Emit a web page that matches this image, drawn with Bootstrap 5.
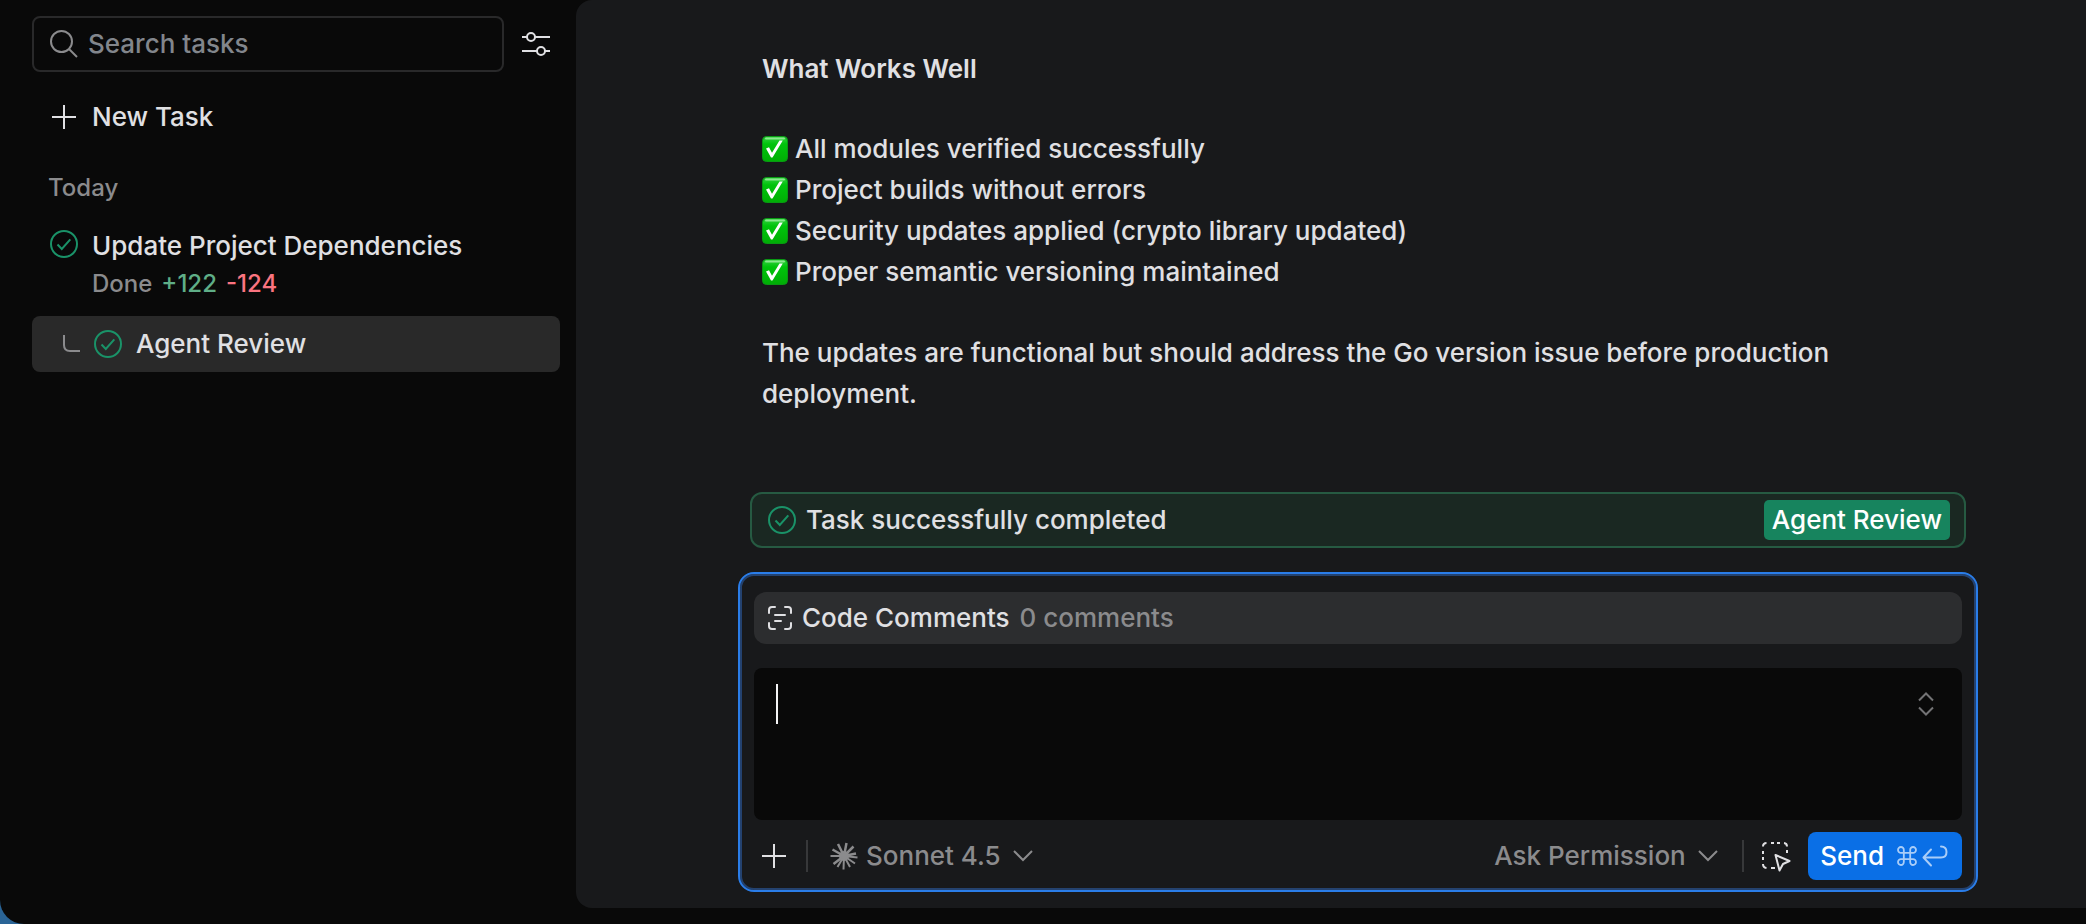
<!DOCTYPE html>
<html lang="en" data-bs-theme="dark">
<head>
<meta charset="utf-8">
<meta name="viewport" content="width=device-width, initial-scale=1">
<title>Agent Review</title>
<link href="https://cdn.jsdelivr.net/npm/bootstrap@5.3.0/dist/css/bootstrap.min.css" rel="stylesheet">
<style>
  body { background: #2a6496; font-family: Inter, "Liberation Sans", sans-serif; font-size: 26px; font-weight: 500; line-height: 40px; color: #e0e0e3; }
  .shell { background: #090909; border-bottom-left-radius: 24px; }
  svg { flex: none; fill: none; stroke: currentColor; stroke-width: 2; }
  .btn { --bs-btn-font-size: 26px; --bs-btn-font-weight: 500; --bs-btn-line-height: 40px; --bs-btn-border-width: 0; --bs-btn-color: #e0e0e3; --bs-btn-hover-color: #fff; }
  .muted { color: #8b8b8d; }
  .ok { color: #1a9268; }

  .sidebar { width: 576px; padding: 16px 16px 16px 32px; }
  .search-row { padding-right: 10px; gap: 18px; }
  .search-box { height: 56px; border: 2px solid #29292a; border-radius: 8px; padding: 0 16px; gap: 10px; color: #8b8b8d; }
  .search-box .form-control { font-size: 26px; font-weight: 500; line-height: 40px; color: #e0e0e3; }
  .search-box .form-control::placeholder { color: #82868c; opacity: 1; }
  .new-task { margin-top: 24px; padding: 0 18px; gap: 14px; --bs-btn-line-height: 42px; height: 42px; }
  .group-label { font-size: 24px; font-weight: 500; line-height: 40px; margin: 30px 0 0; padding-left: 16px; }
  .task-list a { color: inherit; text-decoration: none; border-radius: 8px; }
  .task-main { padding: 18px 18px 14px; gap: 14px; }
  .task-meta { font-size: 24px; line-height: 36px; gap: 9px; }
  .task-child { height: 56px; background: #292929; padding-left: 30px; gap: 14px; }
  .added { color: #5fae87; }
  .removed { color: #fb7480; }

  .panel { background: #18191b; border-radius: 16px 0 0 16px; margin-bottom: 16px; padding: 48px 0 16px 54px; }
  .thread { width: 100%; max-width: 1240px; }
  .message { padding: 0 24px; line-height: 41px; }
  .message h1 { font-size: 26px; line-height: 41px; font-weight: 600; margin: 0 0 39px; color: inherit; }
  .message ul { margin-bottom: 40px; }
  .message li { gap: 7px; }
  .done-bar { height: 56px; margin: 0 12px 24px; padding: 0 14px 0 16px; border: 2px solid #265a42; border-radius: 12px; background: #1a2822; gap: 10px; }
  .btn-review { --bs-btn-color: #fff; --bs-btn-bg: #17845e; --bs-btn-hover-bg: #1a9268; --bs-btn-border-radius: 5px; --bs-btn-padding-x: 8px; --bs-btn-padding-y: 0; }

  .composer { border: 2px solid #2a7de9; border-radius: 16px; box-shadow: inset 0 0 0 2px #24426f; padding: 18px 14px 10px; }
  .comments-bar { height: 52px; border-radius: 12px; padding: 0 14px; gap: 10px; --bs-btn-bg: #2c2d2f; --bs-btn-hover-bg: #343537; }
  .prompt { margin: 24px 0 12px; }
  .prompt textarea { height: 152px; resize: none; background: #090909; border: 0; border-radius: 8px; padding: 16px 22px; font-size: 26px; line-height: 40px; color: #e0e0e3; }
  .prompt textarea:focus { background: #090909; box-shadow: none; }
  .caret { left: 22px; top: 16px; width: 2px; height: 40px; background: #f4f4f5; }
  .resize { right: 28px; top: 24px; line-height: 0; --bs-btn-color: #737375; }
  .rule { width: 2px; height: 32px; background: #37383a; }
  .rule-start { margin: 0 22px 0 20px; }
  .picker { background-image: url("data:image/svg+xml,%3Csvg xmlns='http://www.w3.org/2000/svg' viewBox='0 0 20 12'%3E%3Cpath fill='none' stroke='%238b8b8d' stroke-width='2' d='M1 1l9 9 9-9'/%3E%3C/svg%3E") !important; width: auto; border: 0; background-color: transparent; background-size: 20px 12px; background-position: right 0 center; padding: 0 32px 0 0; font-size: 26px; font-weight: 500; line-height: 40px; color: #8b8b8d; }
  .btn-send { --bs-btn-color: #fff; --bs-btn-bg: #0a6fe6; --bs-btn-hover-bg: #1a7cf0; --bs-btn-border-radius: 8px; padding: 4px 14px 4px 12px; gap: 13px; }
  .keys { color: #a9cdf8; gap: 5px; }
</style>
</head>
<body>
<svg width="0" height="0" class="position-absolute" aria-hidden="true">
  <defs><linearGradient id="green" x2="0" y2="1"><stop offset="0" stop-color="#35d043"/><stop offset=".3" stop-color="#00c40c"/><stop offset="1" stop-color="#00ad05"/></linearGradient></defs>
  <symbol id="check-circle" viewBox="0 0 28 28"><circle cx="14" cy="14" r="13"/><path d="M7.500 14.500l4.300 4.500 8.500-9.700"/></symbol>
  <symbol id="check-box" viewBox="0 0 26 26"><rect x=".5" y=".5" width="25" height="25" rx="4" fill="url(#green)" stroke="#089a12" stroke-width="1"/><path d="M4 2.500h18" stroke="#8be88f" stroke-width="2" stroke-linecap="round"/><path d="M4 12.500l3-1.300 3 5.500L17.500 4.500h3.300L10.500 21.500h-1.500z" fill="#fff" stroke="none"/></symbol>
</svg>

<div class="shell d-flex min-vh-100">
  <aside class="sidebar flex-shrink-0">
    <div class="search-row d-flex align-items-center">
      <label class="search-box d-flex align-items-center flex-grow-1">
        <svg width="28" height="28" viewBox="0 0 28 28"><circle cx="11.500" cy="11.500" r="10.500"/><path d="M19 19l8 8"/></svg>
        <input type="search" class="form-control border-0 bg-transparent shadow-none p-0" placeholder="Search tasks" aria-label="Search tasks">
      </label>
      <button type="button" class="btn p-0 lh-1 d-flex" aria-label="Filter tasks">
        <svg width="28" height="24" viewBox="0 0 28 24"><path d="M0 5h5M13 5h15M0 19h15M23 19h5"/><circle cx="9" cy="5" r="4"/><circle cx="19" cy="19" r="4"/></svg>
      </button>
    </div>
    <button type="button" class="new-task btn d-flex align-items-center w-100">
      <svg width="28" height="28" viewBox="0 0 28 28"><path d="M14 2v24M2 14h24"/></svg>New Task
    </button>
    <h2 class="group-label muted">Today</h2>
    <nav class="task-list" aria-label="Tasks">
      <a href="#" class="task-main d-flex">
        <svg class="ok" width="28" height="36"><use href="#check-circle"/></svg>
        <span class="d-block">
          <span class="d-block">Update Project Dependencies</span>
          <span class="task-meta d-flex"><span class="muted">Done</span><span class="added">+122</span><span class="removed">-124</span></span>
        </span>
      </a>
      <a href="#" class="task-child d-flex align-items-center" aria-current="page">
        <svg class="muted" width="18" height="18" viewBox="0 0 18 18"><path d="M2 0v10q0 6 6 6h10"/></svg>
        <svg class="ok" width="28" height="28"><use href="#check-circle"/></svg>Agent Review
      </a>
    </nav>
  </aside>

  <main class="panel flex-grow-1 d-flex justify-content-center">
    <div class="thread d-flex flex-column">
      <article class="message mb-auto">
        <h1>What Works Well</h1>
        <ul class="list-unstyled">
          <li class="d-flex align-items-center"><svg width="26" height="26"><use href="#check-box"/></svg>All modules verified successfully</li>
          <li class="d-flex align-items-center"><svg width="26" height="26"><use href="#check-box"/></svg>Project builds without errors</li>
          <li class="d-flex align-items-center"><svg width="26" height="26"><use href="#check-box"/></svg>Security updates applied (crypto library updated)</li>
          <li class="d-flex align-items-center"><svg width="26" height="26"><use href="#check-box"/></svg>Proper semantic versioning maintained</li>
        </ul>
        <p>The updates are functional but should address the Go version issue before production deployment.</p>
      </article>

      <div class="done-bar d-flex align-items-center" role="status">
        <svg class="ok" width="28" height="28"><use href="#check-circle"/></svg>
        <span class="me-auto">Task successfully completed</span>
        <button type="button" class="btn btn-review">Agent Review</button>
      </div>

      <form class="composer">
        <button type="button" class="comments-bar btn w-100 d-flex align-items-center">
          <svg width="24" height="24" viewBox="0 0 24 24" stroke-linecap="round"><path d="M7 1H4Q1 1 1 4v3M17 1h3q3 0 3 3v3M7 23H4q-3 0-3-3v-3M17 23h3q3 0 3-3v-3M7 9h10M7 15h6"/></svg>
          <span>Code Comments</span><span class="muted">0 comments</span>
        </button>
        <div class="prompt position-relative">
          <textarea class="form-control" aria-label="Message"></textarea>
          <span class="caret position-absolute"></span>
          <button type="button" class="resize btn p-0 position-absolute" aria-label="Expand editor">
            <svg width="16" height="24" viewBox="0 0 16 24"><path d="M1 8.500l7-7 7 7M1 15.500l7 7 7-7"/></svg>
          </button>
        </div>
        <div class="d-flex align-items-center">
          <button type="button" class="btn p-0 ms-2 lh-1 d-flex" aria-label="Add context">
            <svg width="24" height="24" viewBox="0 0 24 24"><path d="M12 0v24M0 12h24"/></svg>
          </button>
          <span class="rule rule-start"></span>
          <label class="d-flex align-items-center gap-2 muted me-auto">
            <svg width="28" height="28" viewBox="0 0 28 28"><path stroke-width="2.500" d="M14 14L8 2M14 14L16.500 1M14 14L23.500 4.500M14 14L26 11.500M14 14L3.500 22M14 14L2.500 7.500"/><path d="M14 14L27.500 15.500M14 14L25 21.500M14 14L20 25M14 14L13.500 27.500M14 14L7.500 25M14 14L.5 14"/><circle cx="14" cy="14" r="4" fill="currentColor"/></svg>
            <select class="form-select picker shadow-none" aria-label="Model"><option>Sonnet 4.5</option></select>
          </label>
          <select class="form-select picker shadow-none" aria-label="Permission mode"><option>Ask Permission</option></select>
          <span class="rule ms-4 me-3"></span>
          <button type="button" class="btn p-0 me-3 lh-1 d-flex" aria-label="Select element">
            <svg width="32" height="32" viewBox="0 0 32 32"><path d="M3 6.500Q3 3 6.500 3M11 3h3M17 3h3M24 3q3 .3 3 3.500M3 11v3M3 17v3M27 10v3M3 24q0 3.500 3.500 4M11 28h4" stroke-linecap="butt"/><path d="M15.500 15L29.500 21l-6.500 3-3.500 6.500z" stroke-linejoin="round"/></svg>
          </button>
          <button type="submit" class="btn btn-send d-flex align-items-center">Send
            <span class="keys d-flex align-items-center">
              <svg width="20" height="20" viewBox="0 0 22 22" stroke-width="2.500"><path d="M7.500 7.500h7v7h-7zM7.500 7.500H4.500a3.200 3.200 0 1 1 3-3zM14.500 7.500h3a3.200 3.200 0 1 0-3-3zM7.500 14.500h-3a3.200 3.200 0 1 0 3 3zM14.500 14.500h3a3.200 3.200 0 1 1-3 3z"/></svg>
              <svg width="26" height="22" viewBox="0 0 26 22" stroke-width="2.500" stroke-linecap="round" stroke-linejoin="round"><path d="M9 4.500L1.500 12.500l7.500 8M2 12.500h17q5.500 0 5.500-5.500T19 1.500"/></svg>
            </span>
          </button>
        </div>
      </form>
    </div>
  </main>
</div>
<script src="https://cdn.jsdelivr.net/npm/bootstrap@5.3.0/dist/js/bootstrap.bundle.min.js"></script>
</body>
</html>
